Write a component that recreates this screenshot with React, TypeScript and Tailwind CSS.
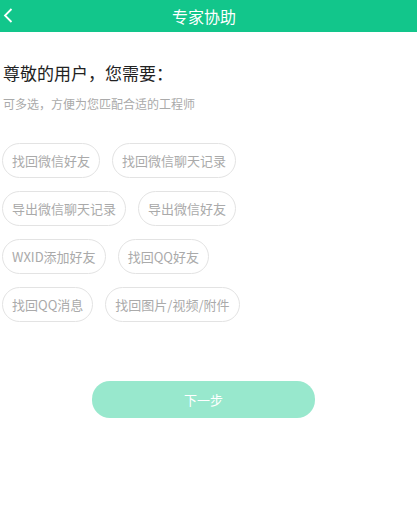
const options = [
  ['找回微信好友', '找回微信聊天记录'],
  ['导出微信聊天记录', '导出微信好友'],
  ['WXID添加好友', '找回QQ好友'],
  ['找回QQ消息', '找回图片/视频/附件'],
]

export default function App() {
  return (
    <div className="h-[510px] w-[417px] bg-white font-['Noto_Sans_CJK_SC',sans-serif]">
      <div className="relative flex h-8 items-center justify-center bg-[#12c68b]">
        <svg className="absolute left-[3px] top-[8px]" width="10" height="15" viewBox="0 0 10 15" fill="none">
          <path d="M8.5 1 L2 7.5 L8.5 14" stroke="white" strokeWidth="1.8" />
        </svg>
        <span className="-ml-[9px] text-[16px] leading-none text-white">专家协助</span>
      </div>

      <div className="px-[3px] pt-[30px]">
        <h1 className="text-[17px] leading-[22px] text-[#222]">尊敬的用户，您需要：</h1>
        <p className="mt-[12px] text-[12px] leading-[16px] text-[#aaa]">可多选，方便为您匹配合适的工程师</p>
      </div>

      <div className="mt-[31px] flex flex-col gap-[13px] px-[2px]">
        {options.map((row, i) => (
          <div key={i} className="flex gap-[12px]">
            {row.map((o) => (
              <button
                key={o}
                className="h-[35px] rounded-full border border-[#e3e3e3] px-[9px] text-[13px] text-[#aaa]"
              >
                {o}
              </button>
            ))}
          </div>
        ))}
      </div>

      <div className="mt-[59px] flex justify-center pr-[10px]">
        <button className="h-[37px] w-[223px] rounded-[18px] bg-[#98e8cd] text-[13px] text-white">下一步</button>
      </div>
    </div>
  )
}
